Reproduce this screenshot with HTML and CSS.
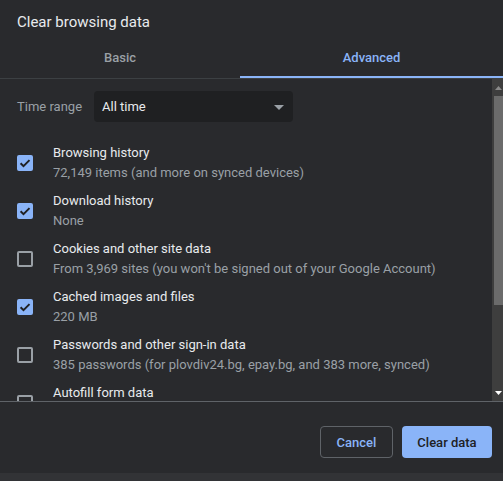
FILE: index.html
```html
<!DOCTYPE html>
<html>
<head>
<meta charset="utf-8">
<link rel="stylesheet" href="styles.css">
</head>
<body>
<div class="dialog">
  <div class="title">Clear browsing data</div>
  <div class="tabs">
    <div class="tab">Basic</div>
    <div class="tab active">Advanced</div>
  </div>
  <div class="body">
    <div class="content">
      <div class="range">
        <span class="range-label">Time range</span>
        <div class="select">
          <span>All time</span>
          <svg class="caret" width="10" height="5" viewBox="0 0 10 5"><path d="M0 0h10L5 5z" fill="#9aa0a6"/></svg>
        </div>
      </div>
      <div class="row">
        <div class="cb on"><svg width="16" height="16" viewBox="0 0 16 16"><path d="M3.6 8.2l2.9 2.9 6-6" fill="none" stroke="#202124" stroke-width="2"/></svg></div>
        <div class="txt"><div class="t">Browsing history</div><div class="s">72,149 items (and more on synced devices)</div></div>
      </div>
      <div class="row">
        <div class="cb on"><svg width="16" height="16" viewBox="0 0 16 16"><path d="M3.6 8.2l2.9 2.9 6-6" fill="none" stroke="#202124" stroke-width="2"/></svg></div>
        <div class="txt"><div class="t">Download history</div><div class="s">None</div></div>
      </div>
      <div class="row">
        <div class="cb"></div>
        <div class="txt"><div class="t">Cookies and other site data</div><div class="s">From 3,969 sites (you won't be signed out of your Google Account)</div></div>
      </div>
      <div class="row">
        <div class="cb on"><svg width="16" height="16" viewBox="0 0 16 16"><path d="M3.6 8.2l2.9 2.9 6-6" fill="none" stroke="#202124" stroke-width="2"/></svg></div>
        <div class="txt"><div class="t">Cached images and files</div><div class="s">220 MB</div></div>
      </div>
      <div class="row">
        <div class="cb"></div>
        <div class="txt"><div class="t">Passwords and other sign-in data</div><div class="s">385 passwords (for plovdiv24.bg, epay.bg, and 383 more, synced)</div></div>
      </div>
      <div class="row">
        <div class="cb"></div>
        <div class="txt"><div class="t">Autofill form data</div><div class="s">&nbsp;</div></div>
      </div>
    </div>
    <div class="scrollbar">
      <div class="arrow"><svg width="7" height="4" viewBox="0 0 7 4"><path d="M0 4h7L3.5 0z" fill="#8a8a8a"/></svg></div>
      <div class="thumb"></div>
      <div class="track"></div>
      <div class="arrow"><svg width="7" height="4" viewBox="0 0 7 4"><path d="M0 0h7L3.5 4z" fill="#ffffff"/></svg></div>
    </div>
  </div>
  <div class="footer">
    <button class="btn cancel">Cancel</button>
    <button class="btn primary">Clear data</button>
  </div>
  <div class="strip"></div>
</div>
</body>
</html>
```
FILE: styles.css
```css
html, body {
  margin: 0;
  padding: 0;
  background: #292a2d;
}
body {
  font-family: Roboto, "Liberation Sans", Arial, sans-serif;
  color: #e8eaed;
  width: 503px;
  height: 481px;
  overflow: hidden;
}
.dialog {
  display: flex;
  flex-direction: column;
  height: 481px;
}
.title {
  font-size: 15px;
  line-height: 20px;
  padding: 12px 17px 0;
  height: 28px;
  color: #e8eaed;
}
.tabs {
  display: flex;
  height: 38px;
  border-bottom: 1px solid #3c4043;
}
.tab {
  flex: 0 0 240px;
  text-align: center;
  font-size: 13px;
  font-weight: 500;
  line-height: 36px;
  color: #9aa0a6;
  border-bottom: 2px solid transparent;
}
.tab.active {
  flex: 1;
  color: #8ab4f8;
  border-bottom-color: #8ab4f8;
}
.body {
  display: flex;
  height: 322px;
  overflow: hidden;
}
.content {
  flex: 1;
  overflow: hidden;
  padding: 12px 0 0 17px;
}
.range {
  display: flex;
  align-items: center;
  height: 31px;
}
.range-label {
  font-size: 13px;
  color: #9aa0a6;
  width: 77px;
}
.select {
  width: 199px;
  height: 31px;
  box-sizing: border-box;
  background: #1f2022;
  border-radius: 4px;
  display: flex;
  align-items: center;
  justify-content: space-between;
  padding: 0 9px 0 8px;
  font-size: 13px;
  color: #e8eaed;
}
.caret {
  display: block;
  margin-top: 1px;
}
.range + .row {
  margin-top: 17px;
}
.row {
  display: flex;
  align-items: center;
  height: 48px;
  gap: 20px;
}
.cb {
  width: 16px;
  height: 16px;
  box-sizing: border-box;
  border: 2px solid #9aa0a6;
  border-radius: 2px;
  flex: none;
  position: relative;
}
.cb.on {
  background: #8ab4f8;
  border-color: #8ab4f8;
}
.cb svg {
  position: absolute;
  left: -2px;
  top: -2px;
}
.t {
  font-size: 13px;
  line-height: 20px;
  color: #e8eaed;
}
.s {
  font-size: 13px;
  line-height: 20px;
  color: #9aa0a6;
}
.scrollbar {
  width: 11px;
  flex: none;
  background: #3e3e3e;
  display: flex;
  flex-direction: column;
}
.arrow {
  height: 17px;
  display: flex;
  align-items: center;
  justify-content: center;
  padding-left: 2px;
}
.thumb {
  height: 209px;
  margin-left: 2px;
  background: #6b6b6b;
}
.track {
  flex: 1;
}
.footer {
  border-top: 1px solid #5f6368;
  height: 72px;
  display: flex;
  justify-content: flex-end;
  align-items: flex-start;
  padding: 24px 11px 0 0;
  box-sizing: border-box;
  gap: 9px;
}
.btn {
  font-family: Roboto, "Liberation Sans", Arial, sans-serif;
  font-size: 13px;
  font-weight: 500;
  height: 32px;
  border-radius: 4px;
  box-sizing: border-box;
  cursor: pointer;
}
.cancel {
  width: 73px;
  background: transparent;
  color: #8ab4f8;
  border: 1px solid #5f6368;
}
.primary {
  width: 90px;
  background: #8ab4f8;
  color: #202124;
  border: none;
}
.strip {
  flex: 1;
  background: #323336;
}
```
